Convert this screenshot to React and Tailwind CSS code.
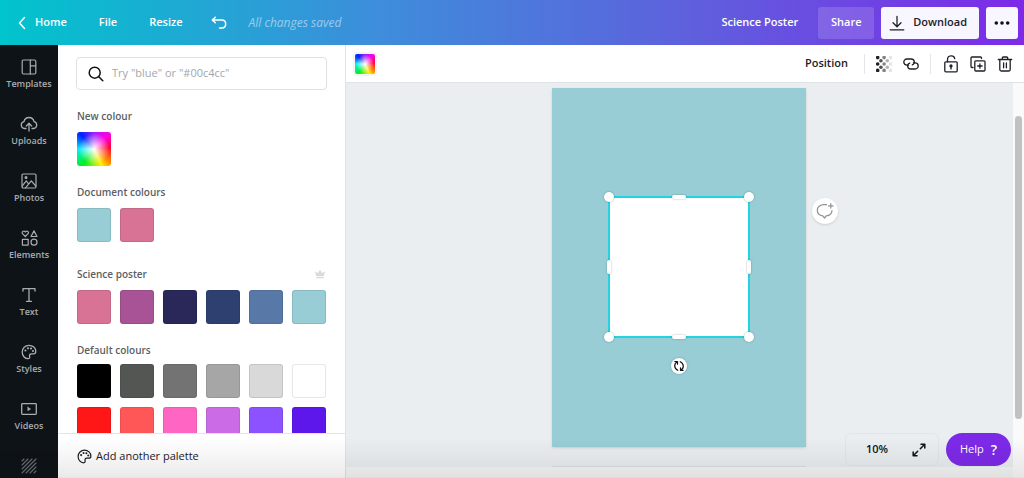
import React, { useState } from "react";

const stroke = {
  fill: "none",
  stroke: "currentColor",
  strokeLinecap: "round",
  strokeLinejoin: "round",
};

const PaletteIcon = ({ className }) => (
  <svg className={className} viewBox="0 0 16 16" {...stroke} strokeWidth="1.3">
    <path d="M8 1.3C4.2 1.3 1.2 4.2 1.2 8c0 3.7 2.6 6.7 5.8 6.7 1.6 0 1.9-1.2 1.6-2.4-.4-1.5.3-2.5 1.9-2.5h2c1.5 0 2.3-.7 2.3-2.2C14.8 4 11.8 1.3 8 1.3Z" />
    <g fill="currentColor" stroke="none">
      <circle cx="4.4" cy="6.5" r="1.1" />
      <circle cx="7" cy="4.3" r="1.1" />
      <circle cx="10" cy="4.5" r="1.1" />
      <circle cx="12" cy="7" r="1.1" />
    </g>
  </svg>
);

const navItems = [
  {
    name: "Templates",
    icon: (
      <svg className="size-4" viewBox="0 0 16 16" {...stroke} strokeWidth="1.2">
        <rect x="1.2" y="1" width="13.6" height="14" rx="1.2" />
        <path d="M9.3 1v14M9.3 6.8h5.5" />
      </svg>
    ),
  },
  {
    name: "Uploads",
    icon: (
      <svg className="h-4 w-[18px]" viewBox="0 0 18 16" {...stroke} strokeWidth="1.3">
        <path d="M6 12.5H4.5A3.5 3.5 0 0 1 4 5.6a5.1 5.1 0 0 1 10 0 3.5 3.5 0 0 1-.5 6.9H12" />
        <path d="M9 15V7.5M6.3 10 9 7.3l2.7 2.7" />
      </svg>
    ),
  },
  {
    name: "Photos",
    icon: (
      <svg className="size-4" viewBox="0 0 16 16" {...stroke} strokeWidth="1.2">
        <rect x="1" y="1" width="14" height="14" rx="1.2" />
        <path d="m1.3 12.8 4-5 2.3 3M4.5 14.8l5.8-7 4.5 5.2" />
        <circle cx="5" cy="4.6" r=".9" fill="currentColor" />
      </svg>
    ),
  },
  {
    name: "Elements",
    icon: (
      <svg className="h-4 w-[17px]" viewBox="0 0 17 16" {...stroke} strokeWidth="1.2">
        <path d="M4.3 6.5 1.5 3.7C.2 2 2.8-.2 4.3 2 5.8-.2 8.4 2 7.1 3.7L4.3 6.5Z" />
        <path d="m13 .9 3 5.6h-6L13 .9Z" />
        <rect x="1.4" y="9.3" width="5.8" height="5.8" />
        <circle cx="13" cy="12.2" r="3" />
      </svg>
    ),
  },
  {
    name: "Text",
    icon: (
      <svg className="size-4" viewBox="0 0 16 16" {...stroke} strokeWidth="1.3">
        <path d="M2 4V1.7h12V4M8 1.7v12.6M5.5 14.3h5" />
      </svg>
    ),
  },
  { name: "Styles", icon: <PaletteIcon className="size-4" /> },
  {
    name: "Videos",
    icon: (
      <svg className="size-4" viewBox="0 0 16 16" {...stroke} strokeWidth="1.3">
        <rect x=".7" y="2.7" width="14.6" height="10.6" rx=".8" />
        <path d="M6.8 6.2v3.6L9.7 8 6.8 6.2Z" fill="currentColor" strokeWidth=".5" />
      </svg>
    ),
  },
  {
    name: "Background",
    iconOnly: true,
    icon: (
      <svg className="size-4 opacity-60" viewBox="0 0 16 16" {...stroke} strokeWidth="1.1">
        <path d="m1 3 2-2M1 7l6-6M1 11 11 1M1 15 15 1M5 15 15 5M9 15l6-6M13 15l2-2" />
      </svg>
    ),
  },
];

const sections = [
  { title: "New colour", spacing: "mt-[18px]", gap: "mt-2", colours: ["custom"] },
  {
    title: "Document colours",
    spacing: "mt-[18px]",
    gap: "mt-2",
    colours: ["#98cdd5", "#d87396"],
  },
  {
    title: "Science poster",
    spacing: "mt-6",
    gap: "mt-2",
    crown: true,
    colours: ["#d87396", "#a75396", "#292858", "#2d4070", "#5879a8", "#98cdd5"],
  },
  {
    title: "Default colours",
    spacing: "mt-[18px]",
    gap: "mt-1.5",
    colours: [
      "#000000",
      "#545654",
      "#737373",
      "#a6a6a6",
      "#d9d9d9",
      "#ffffff",
      "#ff1616",
      "#ff5757",
      "#ff66c4",
      "#cb6ce6",
      "#8c52ff",
      "#5e17eb",
    ],
  },
];

const RAINBOW =
  "bg-[radial-gradient(circle,white_0%,transparent_65%),conic-gradient(#a020ff,#ff00e0_45deg,#ff0030_85deg,#ff8a00_130deg,#fff000_155deg,#00f020_215deg,#00f0ff_270deg,#0020ff_318deg,#a020ff)]";

const Header = () => (
  <header className="flex h-[45px] shrink-0 items-center bg-[linear-gradient(90deg,#00c4cc,#3e8ddb_37%,#5f5fdd_68%,#7d2ae8)] pr-1.5 pl-4 text-[11px] font-semibold text-white">
    <button className="flex items-center gap-[7px]">
      <svg className="h-3.5 w-3" viewBox="0 0 12 14" {...stroke} strokeWidth="1.5">
        <path d="M8.5 1.5 3.5 7l5 5.5" />
      </svg>
      Home
    </button>
    <button className="ml-8">File</button>
    <button className="ml-8">Resize</button>
    <button className="ml-7" aria-label="Undo">
      <svg className="h-3.5 w-4" viewBox="0 0 16 14" {...stroke} strokeWidth="1.5">
        <path d="M4.3 1.2 1.3 4l3 2.8M1.5 4h9.2c5.3 0 5.3 8 0 8H8.5" />
      </svg>
    </button>
    <span className="ml-[22px] text-xs font-normal text-white/50 italic">All changes saved</span>
    <button className="ml-auto">Science Poster</button>
    <button className="ml-5 h-8 w-14 rounded-[3px] bg-white/15">Share</button>
    <button className="ml-[7px] flex h-8 items-center gap-2 rounded-[3px] bg-[#f8f6fe] pr-3 pl-2 text-[#1c2027]">
      <svg className="size-4" viewBox="0 0 16 16" {...stroke} strokeWidth="1.3">
        <path d="M8 1.5v10M4 7.8l4 4 4-4M1.2 14.8h13.6" />
      </svg>
      Download
    </button>
    <button
      className="ml-[7px] flex size-8 items-center justify-center rounded-[3px] bg-[#f8f6fe] text-[#0e1318]"
      aria-label="More"
    >
      <svg className="h-1 w-4" viewBox="0 0 16 4" fill="currentColor">
        <circle cx="2.3" cy="2" r="1.8" />
        <circle cx="8" cy="2" r="1.8" />
        <circle cx="13.7" cy="2" r="1.8" />
      </svg>
    </button>
  </header>
);

const Sidebar = () => (
  <nav className="w-[58px] shrink-0 overflow-hidden bg-[#0e1318] text-[#a9adb1]">
    {navItems.map((item) => (
      <button
        key={item.name}
        aria-label={item.name}
        className="flex h-[57px] w-full flex-col items-center gap-[3px] pt-3.5 text-[9px] leading-3 font-semibold"
      >
        {item.icon}
        {!item.iconOnly && item.name}
      </button>
    ))}
  </nav>
);

const ColourPanel = () => {
  const [query, setQuery] = useState("");

  return (
    <aside className="flex w-[288px] shrink-0 flex-col border-r border-[#dfe3e6] bg-white">
      <div className="min-h-0 flex-1 overflow-hidden px-[19px] pt-3">
        <label className="-ml-px flex h-[33px] w-[251px] items-center gap-2 rounded border border-[#dde1e3] pr-3 pl-[11px]">
          <svg className="size-4 shrink-0 text-[#0e1318]" viewBox="0 0 16 16" {...stroke} strokeWidth="1.5">
            <circle cx="6.7" cy="6.7" r="5.5" />
            <path d="m10.8 10.8 4 4" />
          </svg>
          <input
            className="min-w-0 flex-1 text-[11px] outline-none placeholder:text-[#a3a7aa]"
            aria-label="Search colours"
            value={query}
            onChange={(e) => setQuery(e.target.value)}
            placeholder={'Try "blue" or "#00c4cc"'}
          />
        </label>
        {sections.map((section) => (
          <section key={section.title} className={section.spacing}>
            <div className="flex h-4 items-center justify-between">
              <h2 className="text-[10px] font-semibold text-[#5b5f64]">{section.title}</h2>
              {section.crown && (
                <svg className="h-2.5 w-3 text-[#d9dbdd]" viewBox="0 0 12 10" fill="currentColor">
                  <path d="M1 2.5 3.8 4 6 .8 8.200 4 11 2.500 9.800 7.300H2.200L1 2.500ZM2.300 8h7.400v1.300H2.300z" />
                </svg>
              )}
            </div>
            <div className={`grid grid-cols-[repeat(6,34px)] gap-[9px] ${section.gap}`}>
              {section.colours.map((colour) => (
                <button
                  key={colour}
                  aria-label={colour}
                  className={`size-[34px] rounded-[3px] ${
                    colour === "custom" ? RAINBOW : "border border-[#0e1318]/10"
                  }`}
                  style={colour === "custom" ? undefined : { backgroundColor: colour }}
                />
              ))}
            </div>
          </section>
        ))}
      </div>
      <button className="flex h-[45px] shrink-0 items-center gap-1 border-t border-[#e3e6e8] px-[19px] text-[11px] text-[#1c2027]">
        <PaletteIcon className="size-[15px]" />
        Add another palette
      </button>
    </aside>
  );
};

const checker = [0, 1, 2, 3, 4].flatMap((row) =>
  [0, 1, 2, 3, 4].filter((col) => (row + col) % 2 === 0).map((col) => [row, col])
);

const Toolbar = () => (
  <div className="flex h-[38px] shrink-0 items-center border-b border-[#dfe3e6] bg-white pr-[11px] pl-[9px] text-[#1c2027]">
    <button
      className={`size-5 rounded-[2px] ring-2 ring-[#f3f4f5] ${RAINBOW}`}
      aria-label="Colour"
    />
    <button className="ml-auto text-[11px] font-semibold">Position</button>
    <div className="ml-4 h-5 w-px bg-[#e3e6e8]" />
    <button className="ml-[11px]" aria-label="Transparency">
      <svg className="size-4" viewBox="0 0 16 16" fill="currentColor">
        {checker.map(([row, col]) => (
          <circle
            key={`${row}-${col}`}
            cx={1.7 + col * 3.2}
            cy={1.6 + row * 3.2}
            r="1.8"
            opacity={1 - col * 0.22}
          />
        ))}
      </svg>
    </button>
    <button className="ml-[11px]" aria-label="Link">
      <svg className="size-4" viewBox="0 0 16 16" {...stroke} strokeWidth="1.3">
        <path d="M5.5 9.200H3.900a3.100 3.100 0 0 1 0-6.200h4.400c3.400 0 4.200 4.600 1 5.900" />
        <path d="M10.500 6.800h1.600a3.100 3.100 0 0 1 0 6.200H7.700c-3.400 0-4.200-4.600-1-5.900" />
      </svg>
    </button>
    <div className="ml-[11px] h-5 w-px bg-[#e3e6e8]" />
    <button className="ml-3" aria-label="Lock">
      <svg className="h-[18px] w-4" viewBox="0 0 16 18" {...stroke} strokeWidth="1.3">
        <rect x="1.8" y="6.8" width="12.4" height="10" rx="1" />
        <path d="M4.5 6.8V4.5c0-4.4 6.5-4.8 7.2-.8M8 11.2V14" />
        <circle cx="8" cy="10.9" r="1" fill="currentColor" />
      </svg>
    </button>
    <button className="ml-[11px]" aria-label="Duplicate">
      <svg className="size-4" viewBox="0 0 16 16" {...stroke} strokeWidth="1.3">
        <path d="M3 11.5H2a1 1 0 0 1-1-1V2a1 1 0 0 1 1-1h8.5a1 1 0 0 1 1 1v.5" />
        <rect x="4.8" y="4.8" width="10.2" height="10.2" rx="1" />
        <path d="M9.9 7.8v4.4M7.7 10h4.4" />
      </svg>
    </button>
    <button className="ml-[11px]" aria-label="Delete">
      <svg className="size-4" viewBox="0 0 16 16" {...stroke} strokeWidth="1.3">
        <path d="M1.3 3.5h13.4M5.3 3.3V2a1 1 0 0 1 1-1h3.4a1 1 0 0 1 1 1v1.3M2.8 3.7v9.8a1.5 1.5 0 0 0 1.5 1.5h7.4a1.5 1.5 0 0 0 1.5-1.5V3.7M6.6 6.8v5M9.4 6.8v5" />
      </svg>
    </button>
  </div>
);

const handles = [
  "top-0 left-0 size-2.5 rounded-full",
  "top-0 left-full size-2.5 rounded-full",
  "top-full left-0 size-2.5 rounded-full",
  "top-full left-full size-2.5 rounded-full",
  "top-0 left-1/2 h-1 w-3.5 rounded-sm",
  "top-full left-1/2 h-1 w-3.5 rounded-sm",
  "top-1/2 left-0 h-3.5 w-1 rounded-sm",
  "top-1/2 left-full h-3.5 w-1 rounded-sm",
];

const Poster = () => (
  <div className="relative h-[359px] w-[254px] shrink-0 bg-[#98cdd5] shadow-sm">
    <div className="absolute top-[109px] left-[57px] size-[140px] bg-white ring-1 ring-[#22d3e0] outline-1 -outline-offset-1 outline-[#22d3e0]">
      {handles.map((place) => (
        <span
          key={place}
          className={`absolute -translate-x-1/2 -translate-y-1/2 bg-white shadow-[0_0_2px_rgba(14,19,24,0.35)] ${place}`}
        />
      ))}
      <button
        className="absolute top-[161px] left-1/2 flex size-4 -translate-x-1/2 items-center justify-center rounded-full bg-white text-[#0e1318] shadow-[0_0_2px_rgba(14,19,24,0.3)]"
        aria-label="Rotate"
      >
        <svg className="size-3" viewBox="0 0 12 12" {...stroke} strokeWidth="1.2">
          <path d="M4.8 10.3C.8 8.6.8 3.6 4.2 1.7M1.8 1.5h2.7v2.7M7.2 1.7c4 1.7 4 6.7.6 8.6M10.2 10.5H7.5V7.8" />
        </svg>
      </button>
    </div>
    <button
      className="absolute top-[110px] left-[260px] flex size-[26px] items-center justify-center rounded-full bg-white text-[#8d9196] shadow"
      aria-label="Add comment"
    >
      <svg className="size-[18px]" viewBox="0 0 18 18" {...stroke} strokeWidth="1.2">
        <path d="M10.5 2.6H8C4 2.6 1.3 5 1.3 8.3s2.4 5.3 5.5 5.6L8.5 16l1.7-2.1c3.3-.3 5.6-2.3 5.8-5.4M14.8 1.500v4.6M12.5 3.8h4.6" />
      </svg>
    </button>
  </div>
);

const Editor = () => (
  <main className="flex min-w-0 flex-1 flex-col">
    <Toolbar />
    <div className="flex min-h-0 flex-1">
      <div className="flex min-w-0 flex-1 flex-col">
        <div className="relative flex min-h-0 flex-1 flex-col items-center gap-[19px] overflow-hidden bg-[#ebeef1] pt-[5px] pr-px">
          <Poster />
          <div className="h-[359px] w-[254px] shrink-0 bg-[#dcdfe1]" />
          <div className="absolute right-0.5 bottom-px flex gap-[7px] text-[11px]">
            <div className="flex h-[33px] w-[94px] items-center justify-between rounded-md border border-[#e3e6e9] bg-[#ebeef1] pr-3 pl-5 text-[#0e1318]">
              <button className="font-semibold">10%</button>
              <button aria-label="Full screen">
                <svg className="size-3.5" viewBox="0 0 14 14" {...stroke} strokeWidth="1.5">
                  <path d="M8.3 5.7 12.5 1.5M9 1.2h3.8V5M5.7 8.3l-4.2 4.2M1.2 9v3.8H5" />
                </svg>
              </button>
            </div>
            <button className="flex h-[33px] w-[65px] items-center justify-center gap-[7px] rounded-full bg-[#7d2ae8] text-white">
              Help <span className="text-sm font-semibold">?</span>
            </button>
          </div>
        </div>
        <div className="h-[11px] shrink-0 bg-[#f4f6f6]" />
      </div>
      <div className="w-[11px] shrink-0 bg-[#fafafa] px-0.5 pt-[33px]">
        <div className="h-[303px] rounded-full bg-[#c1c1c1]" />
      </div>
    </div>
  </main>
);

const App = () => (
  <div className="relative flex h-screen flex-col overflow-hidden font-['Open_Sans','Noto_Sans',sans-serif]">
    <Header />
    <div className="flex min-h-0 flex-1">
      <Sidebar />
      <ColourPanel />
      <Editor />
    </div>
    {/* soft fade along the bottom of the window */}
    <div className="pointer-events-none absolute inset-x-0 bottom-0 h-10 border-b border-black/10 bg-linear-to-b from-transparent to-black/8" />
  </div>
);

export default App;
